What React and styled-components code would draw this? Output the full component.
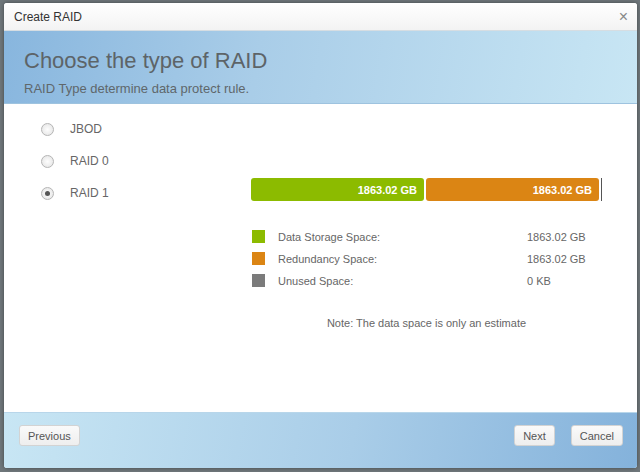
import React, { useState } from "react";
import styled, { createGlobalStyle } from "styled-components";

const GlobalStyle = createGlobalStyle`
  html, body {
    margin: 0;
    padding: 0;
    background: #6f777b;
    font-family: "Liberation Sans", Arial, sans-serif;
  }
`;

const types = ["JBOD", "RAID 0", "RAID 1"];

const legend = [
  { color: "#8cbb00", label: "Data Storage Space:", value: "1863.02 GB" },
  { color: "#db8514", label: "Redundancy Space:", value: "1863.02 GB" },
  { color: "#7b7b7b", label: "Unused Space:", value: "0 KB" },
];

export default function App() {
  const [type, setType] = useState("RAID 1");

  return (
    <>
      <GlobalStyle />
      <Backdrop>
        <Dialog>
          <TitleBar>
            <Title>Create RAID</Title>
            <Close>×</Close>
          </TitleBar>
          <Banner>
            <Heading>Choose the type of RAID</Heading>
            <Sub>RAID Type determine data protect rule.</Sub>
          </Banner>
          <Body>
            <Options>
              {types.map((t) => (
                <Option key={t} onClick={() => setType(t)}>
                  <Radio $checked={type === t} />
                  <span>{t}</span>
                </Option>
              ))}
            </Options>
            <Summary>
              <BarRow>
                <Segment $color="#8cbb00">1863.02 GB</Segment>
                <Segment $color="#db8514">1863.02 GB</Segment>
                <EndMark />
              </BarRow>
              <Legend>
                {legend.map((l) => (
                  <LegendRow key={l.label}>
                    <Swatch $color={l.color} />
                    <LegendLabel>{l.label}</LegendLabel>
                    <LegendValue>{l.value}</LegendValue>
                  </LegendRow>
                ))}
              </Legend>
              <Note>Note: The data space is only an estimate</Note>
            </Summary>
          </Body>
          <Footer>
            <Button>Previous</Button>
            <Spacer />
            <Button>Next</Button>
            <Button>Cancel</Button>
          </Footer>
        </Dialog>
      </Backdrop>
    </>
  );
}

const Backdrop = styled.div`
  width: 640px;
  height: 472px;
  padding: 3px 3px 4px 4px;
  box-sizing: border-box;
`;

const Dialog = styled.div`
  height: 100%;
  background: #fff;
  border-radius: 3px;
  display: flex;
  flex-direction: column;
  overflow: hidden;
  box-shadow: 0 0 4px rgba(0, 0, 0, 0.4);
`;

const TitleBar = styled.div`
  height: 27px;
  display: flex;
  align-items: center;
  padding: 0 9px 0 10px;
  background: linear-gradient(#ffffff, #f3f3f3);
  border-bottom: 1px solid #d6dde2;
`;

const Title = styled.div`
  font-size: 12px;
  color: #333;
  flex: 1;
`;

const Close = styled.div`
  font-size: 16px;
  color: #888;
  line-height: 1;
`;

const Banner = styled.div`
  height: 73px;
  box-sizing: border-box;
  padding: 17px 20px 0;
  background: linear-gradient(100deg, #88b6de 0%, #a9cde8 40%, #c8e6f4 100%);
  border-bottom: 1px solid #9ec3df;
`;

const Heading = styled.div`
  font-size: 22px;
  color: #5d6468;
  line-height: 26px;
`;

const Sub = styled.div`
  margin-top: 7px;
  font-size: 13px;
  color: #5f676b;
`;

const Body = styled.div`
  flex: 1;
  display: flex;
  padding: 15px 0 0 37px;
`;

const Options = styled.div`
  width: 210px;
  display: flex;
  flex-direction: column;
  gap: 12px;
`;

const Option = styled.label`
  display: flex;
  align-items: center;
  gap: 16px;
  height: 20px;
  font-size: 12px;
  color: #666;
  cursor: pointer;
`;

const Radio = styled.span`
  width: 11px;
  height: 11px;
  border-radius: 50%;
  border: 1px solid #b5b5b5;
  background: radial-gradient(circle, #fdfdfd 0%, #e2e2e2 100%);
  position: relative;
  &::after {
    content: "";
    display: ${(p) => (p.$checked ? "block" : "none")};
    position: absolute;
    left: 3px;
    top: 3px;
    width: 5px;
    height: 5px;
    border-radius: 50%;
    background: #555;
  }
`;

const Summary = styled.div`
  display: flex;
  flex-direction: column;
  padding-top: 59px;
`;

const BarRow = styled.div`
  display: flex;
  align-items: center;
  gap: 2px;
`;

const Segment = styled.div`
  width: 173px;
  height: 23px;
  box-sizing: border-box;
  padding-right: 7px;
  display: flex;
  align-items: center;
  justify-content: flex-end;
  background: ${(p) => p.$color};
  border-radius: 3px;
  color: #fff;
  font-weight: bold;
  font-size: 11px;
`;

const EndMark = styled.div`
  width: 1px;
  height: 23px;
  background: #555;
`;

const Legend = styled.div`
  margin-top: 28px;
  display: flex;
  flex-direction: column;
  gap: 7px;
`;

const LegendRow = styled.div`
  display: flex;
  align-items: center;
  height: 15px;
  font-size: 11px;
  color: #666;
`;

const Swatch = styled.div`
  width: 13px;
  height: 13px;
  margin-left: 1px;
  background: ${(p) => p.$color};
`;

const LegendLabel = styled.div`
  width: 249px;
  margin-left: 13px;
`;

const LegendValue = styled.div``;

const Note = styled.div`
  margin-top: 29px;
  font-size: 11px;
  color: #666;
  text-align: center;
`;

const Footer = styled.div`
  height: 56px;
  box-sizing: border-box;
  display: flex;
  align-items: flex-start;
  gap: 16px;
  padding: 12px 14px 0 15px;
  background: linear-gradient(100deg, #c8e6f4 0%, #a9cde8 55%, #84b2db 100%);
  border-top: 1px solid #b8d6ea;
`;

const Spacer = styled.div`
  flex: 1;
`;

const Button = styled.button`
  height: 21px;
  padding: 0 8px;
  font-family: "Liberation Sans", Arial, sans-serif;
  font-size: 11px;
  color: #555;
  background: linear-gradient(#fafafa, #eeeeee);
  border: 1px solid #d3d3d3;
  border-radius: 3px;
`;
